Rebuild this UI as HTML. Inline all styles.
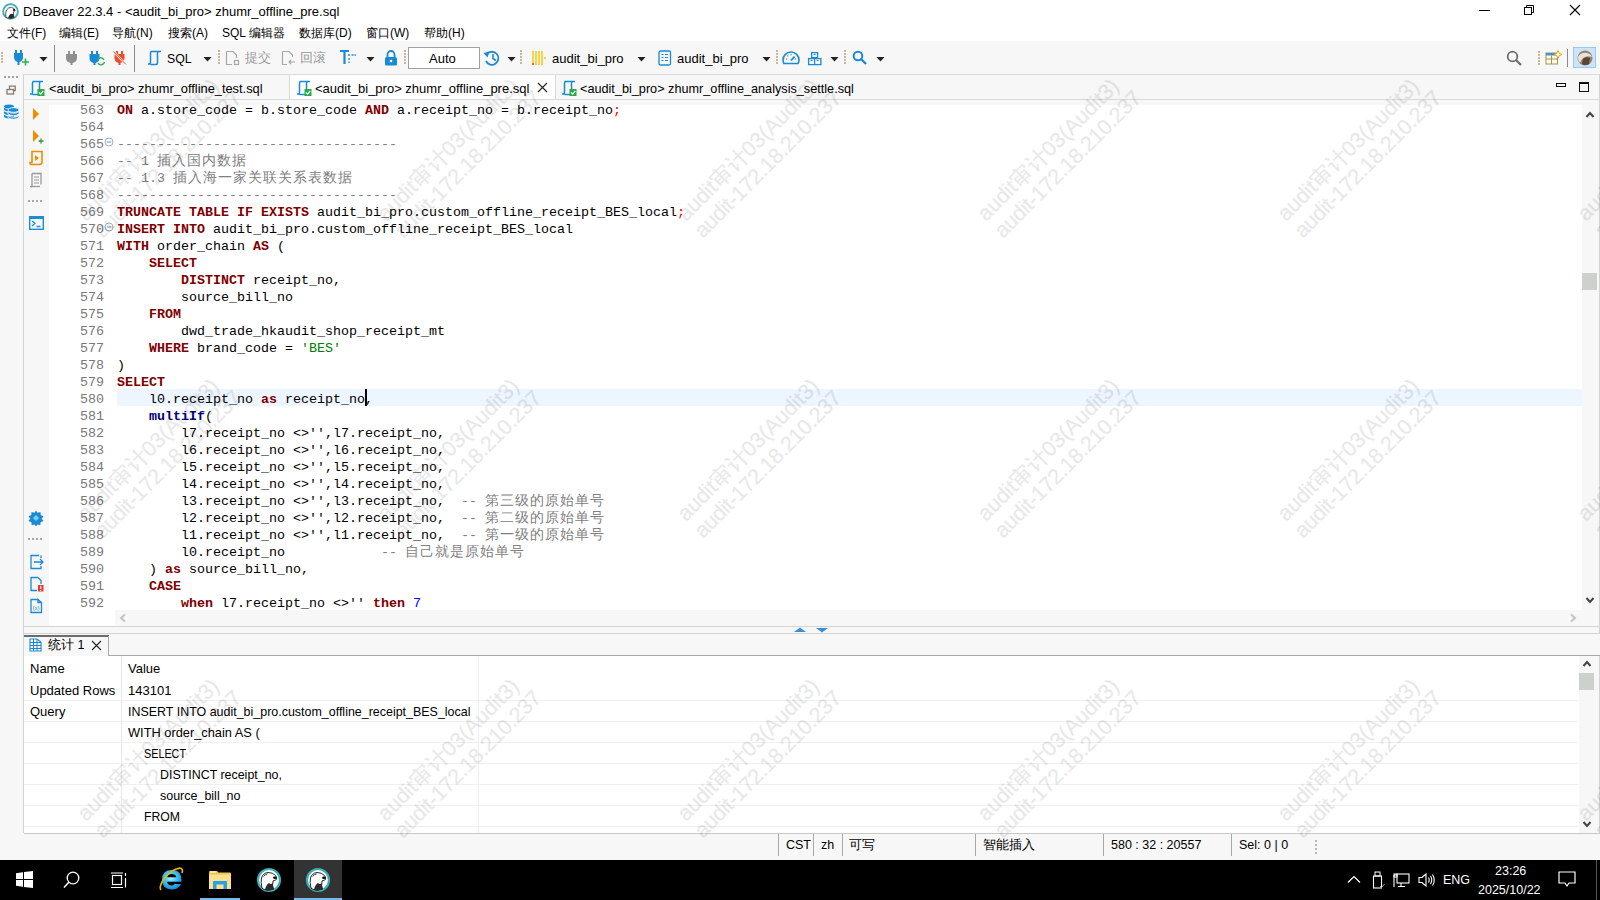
<!DOCTYPE html><html><head><meta charset="utf-8"><style>
html,body{margin:0;padding:0;width:1600px;height:900px;overflow:hidden;background:#f7f7f7}
.t{position:absolute;white-space:pre;line-height:1}
.b{position:absolute}
.ln{position:absolute;left:49px;width:55px;text-align:right;font-family:'Liberation Mono',monospace;font-size:13.33px;line-height:17px;color:#787878;white-space:pre}
.cl{position:absolute;left:117px;font-family:'Liberation Mono',monospace;font-size:13.33px;line-height:17px;color:#000;white-space:pre}
.cl b{font-weight:bold}
.wm{position:absolute;transform-origin:0 0;transform:rotate(-45deg) translate(0,-18px);font-family:'Liberation Sans',sans-serif;font-size:21.5px;line-height:23.5px;color:#000;-webkit-text-stroke:0.3px #000;opacity:0.085;white-space:pre;pointer-events:none}
.cj{font-size:14px;letter-spacing:1px}
</style></head><body>
<div class="b" style="left:0px;top:0px;width:1600px;height:41px;background:#fff"></div>
<div class="b" style="left:0px;top:41px;width:1600px;height:819px;background:#f7f7f7"></div>
<div class="t" style="left:23px;top:4px;font-size:13px;color:#000;font-family:'Liberation Sans', sans-serif;font-weight:normal;line-height:16px">DBeaver 22.3.4 - &lt;audit_bi_pro&gt; zhumr_offline_pre.sql</div>
<svg class="b" style="left:2px;top:3px" width="17" height="17" viewBox="0 0 17 17"><circle cx="8.5" cy="8.5" r="7.4" fill="#f2f2f2" stroke="#3ab0b8" stroke-width="1.8"/><path d="M4 14.5 Q3 10 4.5 7 Q6.5 4 9.5 4.5 Q12.5 5 13 7.5 L11.5 9 Q11 12 12 14.5 Q8 16.5 4 14.5 Z" fill="#fff" stroke="#333" stroke-width="0.8"/><ellipse cx="12" cy="7" rx="1.2" ry="0.9" fill="#111"/><path d="M6 15 Q7 11.5 9 10.5 Q10.5 11.5 11.5 10.5 L12 14.8 Q9 16 6 15 Z" fill="#2e2a28"/></svg>
<div class="b" style="left:1479px;top:10px;width:11px;height:1px;background:#000"></div>
<svg class="b" style="left:1522px;top:3px" width="14" height="14" viewBox="0 0 14 14"><rect x="2.5" y="4.5" width="7" height="7" fill="none" stroke="#000"/><path d="M4.5 4.5 V2.5 H11.5 V9.5 H9.5" fill="none" stroke="#000"/></svg>
<svg class="b" style="left:1568px;top:3px" width="14" height="14" viewBox="0 0 14 14"><path d="M2 2 L12 12 M12 2 L2 12" stroke="#000" stroke-width="1.1"/></svg>
<div class="t" style="left:7px;top:25px;font-size:12px;color:#000;font-family:'Liberation Sans', sans-serif;font-weight:normal;line-height:16px">文件(F)</div>
<div class="t" style="left:59px;top:25px;font-size:12px;color:#000;font-family:'Liberation Sans', sans-serif;font-weight:normal;line-height:16px">编辑(E)</div>
<div class="t" style="left:112px;top:25px;font-size:12px;color:#000;font-family:'Liberation Sans', sans-serif;font-weight:normal;line-height:16px">导航(N)</div>
<div class="t" style="left:168px;top:25px;font-size:12px;color:#000;font-family:'Liberation Sans', sans-serif;font-weight:normal;line-height:16px">搜索(A)</div>
<div class="t" style="left:222px;top:25px;font-size:12px;color:#000;font-family:'Liberation Sans', sans-serif;font-weight:normal;line-height:16px">SQL 编辑器</div>
<div class="t" style="left:299px;top:25px;font-size:12px;color:#000;font-family:'Liberation Sans', sans-serif;font-weight:normal;line-height:16px">数据库(D)</div>
<div class="t" style="left:366px;top:25px;font-size:12px;color:#000;font-family:'Liberation Sans', sans-serif;font-weight:normal;line-height:16px">窗口(W)</div>
<div class="t" style="left:424px;top:25px;font-size:12px;color:#000;font-family:'Liberation Sans', sans-serif;font-weight:normal;line-height:16px">帮助(H)</div>
<div class="b" style="left:1px;top:52px;width:2px;height:2px;background:#c8b89a"></div>
<div class="b" style="left:1px;top:55px;width:2px;height:2px;background:#c8b89a"></div>
<div class="b" style="left:1px;top:58px;width:2px;height:2px;background:#c8b89a"></div>
<div class="b" style="left:1px;top:61px;width:2px;height:2px;background:#c8b89a"></div>
<svg class="b" style="left:13px;top:49px" width="17" height="17" viewBox="0 0 17 17"><path d="M3 1 V4 M8 1 V4" stroke="#1b8ad6" stroke-width="2"/><path d="M1 4 H10 V8 Q10 12 6.5 13 V16 H4.5 V13 Q1 12 1 8 Z" fill="#1b8ad6"/><path d="M9 13 H16 M12.5 9.5 V16.5" stroke="#2db24a" stroke-width="1.6"/></svg>
<svg class="b" style="left:39px;top:57px" width="9" height="5" viewBox="0 0 9 5"><path d="M0.5 0 H8.5 L4.5 4.5 Z" fill="#222"/></svg>
<div class="b" style="left:54px;top:45px;width:1px;height:27px;background:#8c8c8c"></div>
<svg class="b" style="left:66px;top:51px" width="12" height="14" viewBox="0 0 12 14"><path d="M3 0 V3 M8 0 V3" stroke="#8f8f8f" stroke-width="2"/><path d="M0 3 H11 V7 Q11 11 6.5 12 V14 H4.5 V12 Q0 11 0 7 Z" fill="#8f8f8f"/></svg>
<svg class="b" style="left:89px;top:50px" width="16" height="16" viewBox="0 0 16 16"><path d="M3 1 V4 M8 1 V4" stroke="#1b8ad6" stroke-width="2"/><path d="M0.5 4 H10.5 V8 Q10.5 12 6.5 13 V15 H4.5 V13 Q0.5 12 0.5 8 Z" fill="#1b8ad6"/><path d="M8.5 10 A3.5 3.5 0 0 1 15 10 M15.5 12 A3.5 3.5 0 0 1 9 13" stroke="#2db24a" stroke-width="1.4" fill="none"/></svg>
<svg class="b" style="left:113px;top:50px" width="14" height="16" viewBox="0 0 14 16"><path d="M4 1 V4 M9 1 V4" stroke="#f04a2a" stroke-width="2"/><path d="M1.5 4 H11.5 V8 Q11.5 12 7.5 13 V15 H5.5 V13 Q1.5 12 1.5 8 Z" fill="#f04a2a"/><path d="M0.5 1.5 L13 14.5" stroke="#fff" stroke-width="2"/><path d="M0.5 1.5 L13 14.5" stroke="#f04a2a" stroke-width="1"/></svg>
<div class="b" style="left:134px;top:45px;width:1px;height:27px;background:#8c8c8c"></div>
<svg class="b" style="left:147px;top:50px" width="16" height="16" viewBox="0 0 16 16"><path d="M3.5 1.5 H13 M5 1.5 Q3.5 1.5 3.5 3 V12.5 Q3.5 14 2 14 H1 M3.5 14.5 H9 Q10.5 14.5 10.5 13 V3 Q10.5 1.5 12 1.5 H14" stroke="#1b8ad6" stroke-width="1.5" fill="none"/></svg>
<div class="t" style="left:167px;top:51.5px;font-size:12.3px;color:#000;font-family:'Liberation Sans', sans-serif;font-weight:normal;line-height:15px">SQL</div>
<svg class="b" style="left:203px;top:57px" width="9" height="5" viewBox="0 0 9 5"><path d="M0.5 0 H8.5 L4.5 4.5 Z" fill="#222"/></svg>
<div class="b" style="left:218px;top:50px;width:2px;height:2px;background:#c8b89a"></div>
<div class="b" style="left:218px;top:53px;width:2px;height:2px;background:#c8b89a"></div>
<div class="b" style="left:218px;top:56px;width:2px;height:2px;background:#c8b89a"></div>
<div class="b" style="left:218px;top:59px;width:2px;height:2px;background:#c8b89a"></div>
<div class="b" style="left:218px;top:62px;width:2px;height:2px;background:#c8b89a"></div>
<svg class="b" style="left:225px;top:50px" width="16" height="16" viewBox="0 0 16 16"><path d="M1.5 1.5 H8 L11.5 5 V8 M1.5 1.5 V14.5 H7" stroke="#a8a8a8" stroke-width="1.2" fill="none"/><rect x="9.5" y="10.5" width="4" height="4" fill="none" stroke="#a8a8a8" stroke-width="1.2"/></svg>
<div class="t" style="left:245px;top:51px;font-size:12.5px;color:#9a9a9a;font-family:'Liberation Sans', sans-serif;font-weight:normal;line-height:15px">提交</div>
<svg class="b" style="left:281px;top:50px" width="16" height="16" viewBox="0 0 16 16"><path d="M1.5 1.5 H8 L11.5 5 V7 M1.5 1.5 V14.5 H6" stroke="#a8a8a8" stroke-width="1.2" fill="none"/><path d="M8 12 H14 M10 10 L8 12 L10 14" stroke="#a8a8a8" stroke-width="1.1" fill="none"/></svg>
<div class="t" style="left:300px;top:51px;font-size:12.5px;color:#9a9a9a;font-family:'Liberation Sans', sans-serif;font-weight:normal;line-height:15px">回滚</div>
<svg class="b" style="left:339px;top:49px" width="18" height="17" viewBox="0 0 18 17"><path d="M1 2 H10 M5.5 2 V15" stroke="#1b8ad6" stroke-width="2.2"/><path d="M9 6 H11 M12.5 6 H14.5 M15.5 6 H17 M10 9 V11 M10 12.5 V14" stroke="#1b8ad6" stroke-width="1.3"/></svg>
<svg class="b" style="left:366px;top:57px" width="9" height="5" viewBox="0 0 9 5"><path d="M0.5 0 H8.5 L4.5 4.5 Z" fill="#222"/></svg>
<svg class="b" style="left:384px;top:50px" width="14" height="16" viewBox="0 0 14 16"><path d="M3.5 7 V4.5 A3.5 3.5 0 0 1 10.5 4.5 V7" stroke="#1b8ad6" stroke-width="1.8" fill="none"/><rect x="1" y="7" width="12" height="8.5" rx="1.5" fill="#1b8ad6"/><circle cx="7" cy="11" r="1.3" fill="#fff"/></svg>
<div class="b" style="left:404px;top:50px;width:2px;height:2px;background:#c8b89a"></div>
<div class="b" style="left:404px;top:53px;width:2px;height:2px;background:#c8b89a"></div>
<div class="b" style="left:404px;top:56px;width:2px;height:2px;background:#c8b89a"></div>
<div class="b" style="left:404px;top:59px;width:2px;height:2px;background:#c8b89a"></div>
<div class="b" style="left:404px;top:62px;width:2px;height:2px;background:#c8b89a"></div>
<div class="b" style="left:408px;top:47px;width:72px;height:22px;background:#fff;border:1px solid #a0a0a0;box-sizing:border-box"></div>
<div class="t" style="left:429px;top:51px;font-size:13px;color:#000;font-family:'Liberation Sans', sans-serif;font-weight:normal;line-height:15px">Auto</div>
<svg class="b" style="left:483px;top:49px" width="18" height="18" viewBox="0 0 18 18"><path d="M4 5 A6.5 6.5 0 1 1 3 12" stroke="#1b8ad6" stroke-width="1.8" fill="none"/><path d="M0.5 4 L4.5 8.5 L6.5 2.5 Z" fill="#1b8ad6"/><path d="M10 5 V9.5 L13 11.5" stroke="#1b8ad6" stroke-width="1.6" fill="none"/></svg>
<svg class="b" style="left:507px;top:57px" width="9" height="5" viewBox="0 0 9 5"><path d="M0.5 0 H8.5 L4.5 4.5 Z" fill="#222"/></svg>
<div class="b" style="left:520px;top:50px;width:2px;height:2px;background:#c8b89a"></div>
<div class="b" style="left:520px;top:53px;width:2px;height:2px;background:#c8b89a"></div>
<div class="b" style="left:520px;top:56px;width:2px;height:2px;background:#c8b89a"></div>
<div class="b" style="left:520px;top:59px;width:2px;height:2px;background:#c8b89a"></div>
<div class="b" style="left:520px;top:62px;width:2px;height:2px;background:#c8b89a"></div>
<svg class="b" style="left:531px;top:50px" width="16" height="16" viewBox="0 0 16 16"><path d="M2 1 V15 M5 1 V15 M8 1 V15 M11 1 V15" stroke="#f2c500" stroke-width="1.4"/><path d="M14 7 V9" stroke="#f2c500" stroke-width="1.4"/><path d="M2 13 V15" stroke="#e53935" stroke-width="1.4"/></svg>
<div class="t" style="left:552px;top:51px;font-size:13px;color:#000;font-family:'Liberation Sans', sans-serif;font-weight:normal;line-height:15px">audit_bi_pro</div>
<svg class="b" style="left:637px;top:57px" width="9" height="5" viewBox="0 0 9 5"><path d="M0.5 0 H8.5 L4.5 4.5 Z" fill="#222"/></svg>
<svg class="b" style="left:658px;top:50px" width="14" height="16" viewBox="0 0 14 16"><rect x="1" y="1" width="11.5" height="14" rx="1.5" fill="none" stroke="#1b8ad6" stroke-width="1.3"/><path d="M3.5 4.5 H5.5 M7 4.5 H10 M3.5 7.5 H5.5 M7 7.5 H10 M3.5 10.5 H5.5 M7 10.5 H10" stroke="#1b8ad6" stroke-width="1.2"/></svg>
<div class="t" style="left:677px;top:51px;font-size:13px;color:#000;font-family:'Liberation Sans', sans-serif;font-weight:normal;line-height:15px">audit_bi_pro</div>
<svg class="b" style="left:762px;top:57px" width="9" height="5" viewBox="0 0 9 5"><path d="M0.5 0 H8.5 L4.5 4.5 Z" fill="#222"/></svg>
<div class="b" style="left:776px;top:50px;width:2px;height:2px;background:#c8b89a"></div>
<div class="b" style="left:776px;top:53px;width:2px;height:2px;background:#c8b89a"></div>
<div class="b" style="left:776px;top:56px;width:2px;height:2px;background:#c8b89a"></div>
<div class="b" style="left:776px;top:59px;width:2px;height:2px;background:#c8b89a"></div>
<div class="b" style="left:776px;top:62px;width:2px;height:2px;background:#c8b89a"></div>
<svg class="b" style="left:782px;top:50px" width="18" height="16" viewBox="0 0 18 16"><path d="M2 13.5 Q1 12 1 10 A8 8 0 0 1 17 10 Q17 12 16 13.5 Z" stroke="#1b8ad6" stroke-width="1.6" fill="none"/><path d="M9 10.5 L12.5 6.5" stroke="#1b8ad6" stroke-width="1.8"/><path d="M4 9 H5.2 M9 4 V5.2 M12.8 9 H14 M5.5 5.5 L6.3 6.3" stroke="#1b8ad6" stroke-width="1.1"/></svg>
<svg class="b" style="left:807px;top:51px" width="16" height="15" viewBox="0 0 16 15"><rect x="4.6" y="1.6" width="6" height="5" fill="none" stroke="#1b8ad6" stroke-width="1.3"/><rect x="1.6" y="7.6" width="12.3" height="6" fill="none" stroke="#1b8ad6" stroke-width="1.3"/><path d="M7.6 7.6 V13.6 M6.5 3.5 H8.7 M3.5 9.5 H5.5 M9.5 9.5 H11.5" stroke="#1b8ad6" stroke-width="1.2"/></svg>
<svg class="b" style="left:830px;top:57px" width="9" height="5" viewBox="0 0 9 5"><path d="M0.5 0 H8.5 L4.5 4.5 Z" fill="#222"/></svg>
<div class="b" style="left:844px;top:50px;width:2px;height:2px;background:#c8b89a"></div>
<div class="b" style="left:844px;top:53px;width:2px;height:2px;background:#c8b89a"></div>
<div class="b" style="left:844px;top:56px;width:2px;height:2px;background:#c8b89a"></div>
<div class="b" style="left:844px;top:59px;width:2px;height:2px;background:#c8b89a"></div>
<div class="b" style="left:844px;top:62px;width:2px;height:2px;background:#c8b89a"></div>
<svg class="b" style="left:852px;top:50px" width="16" height="16" viewBox="0 0 16 16"><circle cx="6" cy="6" r="4.3" stroke="#1b8ad6" stroke-width="2" fill="none"/><path d="M9 9 L14 14" stroke="#1b8ad6" stroke-width="2.4"/></svg>
<svg class="b" style="left:876px;top:57px" width="9" height="5" viewBox="0 0 9 5"><path d="M0.5 0 H8.5 L4.5 4.5 Z" fill="#222"/></svg>
<svg class="b" style="left:1506px;top:50px" width="17" height="17" viewBox="0 0 17 17"><circle cx="6.5" cy="6.5" r="4.8" stroke="#6e6e6e" stroke-width="1.8" fill="none"/><path d="M10 10 L15 15" stroke="#6e6e6e" stroke-width="2.2"/></svg>
<div class="b" style="left:1538px;top:51px;width:2px;height:2px;background:#c8b89a"></div>
<div class="b" style="left:1538px;top:54px;width:2px;height:2px;background:#c8b89a"></div>
<div class="b" style="left:1538px;top:57px;width:2px;height:2px;background:#c8b89a"></div>
<div class="b" style="left:1538px;top:60px;width:2px;height:2px;background:#c8b89a"></div>
<div class="b" style="left:1538px;top:63px;width:2px;height:2px;background:#c8b89a"></div>
<svg class="b" style="left:1545px;top:50px" width="18" height="16" viewBox="0 0 18 16"><rect x="1" y="3" width="11.5" height="11" fill="#fbfbf0" stroke="#a8954a" stroke-width="1"/><rect x="1" y="3" width="11.5" height="2.5" fill="#4a90d9"/><path d="M1 9 H12.5 M6.5 5.5 V14" stroke="#a8954a" stroke-width="1"/><path d="M13 0.5 L14.2 3.3 L17 4.5 L14.2 5.7 L13 8.5 L11.8 5.7 L9 4.5 L11.8 3.3 Z" fill="#fff" stroke="#e0a800" stroke-width="1"/></svg>
<div class="b" style="left:1567px;top:49px;width:1px;height:18px;background:#8a8a8a"></div>
<div class="b" style="left:1573px;top:47px;width:23px;height:21px;background:#cce4f7;border:1px solid #99c9ef;box-sizing:border-box"></div>
<svg class="b" style="left:1577px;top:50px" width="16" height="16" viewBox="0 0 16 16"><circle cx="8" cy="8" r="7.5" fill="#9a8272"/><path d="M1 7 Q4 2 10 3 Q14 4 15 7 Q10 5 6 8 Q4 10 3 13 Q0.5 10 1 7 Z" fill="#e8e2dc"/><path d="M6 9 Q9 6 13 8 L12 14 Q8 16 5 14 Z" fill="#5a4538"/></svg>
<div class="b" style="left:4px;top:76px;width:2px;height:2px;background:#a0a0a0"></div>
<div class="b" style="left:8px;top:76px;width:2px;height:2px;background:#a0a0a0"></div>
<div class="b" style="left:12px;top:76px;width:2px;height:2px;background:#a0a0a0"></div>
<div class="b" style="left:16px;top:76px;width:2px;height:2px;background:#a0a0a0"></div>
<svg class="b" style="left:6px;top:85px" width="10" height="10" viewBox="0 0 10 10"><rect x="1" y="4.5" width="6.5" height="4.5" fill="none" stroke="#857a6c" stroke-width="1.3"/><path d="M3.5 4 V1.2 H9.2 V5.5 H7.8" fill="none" stroke="#857a6c" stroke-width="1.3"/></svg>
<svg class="b" style="left:3px;top:104px" width="17" height="16" viewBox="0 0 17 16"><g fill="#1b8ad6"><ellipse cx="6" cy="2.5" rx="5" ry="2"/><path d="M1 3.8 Q6 7 11 3.8 V6 Q6 9 1 6 Z M1 7.3 Q6 10.5 11 7.3 V9.5 Q6 12.5 1 9.5 Z M1 10.8 Q6 14 11 10.8 V13 Q6 16 1 13 Z"/></g><g fill="#1b8ad6" stroke="#f7f7f7" stroke-width="0.9"><ellipse cx="10.5" cy="6" rx="5.5" ry="2.3"/><path d="M5 7.5 Q10.5 11 16 7.5 V10 Q10.5 13.5 5 10 Z M5 11.5 Q10.5 15 16 11.5 V13.5 Q10.5 17 5 13.5 Z"/></g></svg>
<div class="b" style="left:23px;top:74px;width:1577px;height:1px;background:#dcdcdc"></div>
<div class="b" style="left:23px;top:74px;width:1px;height:759px;background:#d4d4d4"></div>
<div class="b" style="left:24px;top:75px;width:1575px;height:24px;background:#f7f7f7"></div>
<div class="b" style="left:24px;top:99px;width:1576px;height:1px;background:#d9d9d9"></div>
<div class="b" style="left:290px;top:75px;width:265px;height:24px;background:#fff"></div>
<div class="b" style="left:289px;top:75px;width:1px;height:24px;background:#d9d9d9"></div>
<div class="b" style="left:555px;top:75px;width:1px;height:24px;background:#d9d9d9"></div>
<svg class="b" style="left:29px;top:80px" width="16" height="16" viewBox="0 0 16 16"><path d="M3.5 1.5 H13 M5 1.5 Q3.5 1.5 3.5 3 V12.5 Q3.5 14 2 14 H1 M3.5 14.5 H9 Q10.5 14.5 10.5 13 V3 Q10.5 1.5 12 1.5 H14" stroke="#1b8ad6" stroke-width="1.5" fill="none"/><rect x="8.5" y="9" width="7" height="7" fill="#2aa84a"/><path d="M10 12.5 L11.7 14.2 L14.3 10.8" stroke="#fff" stroke-width="1.2" fill="none"/></svg>
<div class="t" style="left:49px;top:81px;font-size:13px;color:#000;font-family:'Liberation Sans', sans-serif;font-weight:normal;line-height:15px;transform:scaleX(0.986);transform-origin:0 0">&lt;audit_bi_pro&gt; zhumr_offline_test.sql</div>
<svg class="b" style="left:296px;top:80px" width="16" height="16" viewBox="0 0 16 16"><path d="M3.5 1.5 H13 M5 1.5 Q3.5 1.5 3.5 3 V12.5 Q3.5 14 2 14 H1 M3.5 14.5 H9 Q10.5 14.5 10.5 13 V3 Q10.5 1.5 12 1.5 H14" stroke="#1b8ad6" stroke-width="1.5" fill="none"/><rect x="8.5" y="9" width="7" height="7" fill="#2aa84a"/><path d="M10 12.5 L11.7 14.2 L14.3 10.8" stroke="#fff" stroke-width="1.2" fill="none"/></svg>
<div class="t" style="left:315px;top:81px;font-size:13px;color:#000;font-family:'Liberation Sans', sans-serif;font-weight:normal;line-height:15px">&lt;audit_bi_pro&gt; zhumr_offline_pre.sql</div>
<svg class="b" style="left:537px;top:82px" width="11" height="11" viewBox="0 0 11 11"><path d="M1 1 L10 10 M10 1 L1 10" stroke="#222" stroke-width="1.1"/></svg>
<svg class="b" style="left:561px;top:80px" width="16" height="16" viewBox="0 0 16 16"><path d="M3.5 1.5 H13 M5 1.5 Q3.5 1.5 3.5 3 V12.5 Q3.5 14 2 14 H1 M3.5 14.5 H9 Q10.5 14.5 10.5 13 V3 Q10.5 1.5 12 1.5 H14" stroke="#1b8ad6" stroke-width="1.5" fill="none"/><rect x="8.5" y="9" width="7" height="7" fill="#2aa84a"/><path d="M10 12.5 L11.7 14.2 L14.3 10.8" stroke="#fff" stroke-width="1.2" fill="none"/></svg>
<div class="t" style="left:580px;top:81px;font-size:13px;color:#000;font-family:'Liberation Sans', sans-serif;font-weight:normal;line-height:15px;transform:scaleX(0.975);transform-origin:0 0">&lt;audit_bi_pro&gt; zhumr_offline_analysis_settle.sql</div>
<div class="b" style="left:1556px;top:83px;width:10px;height:4px;border:1.5px solid #111;box-sizing:border-box"></div>
<div class="b" style="left:1579px;top:82px;width:10px;height:10px;border:1.5px solid #111;border-top-width:2.5px;box-sizing:border-box"></div>
<div class="b" style="left:24px;top:100px;width:25px;height:526px;background:#f7f7f7"></div>
<div class="b" style="left:49px;top:105px;width:1533px;height:505px;background:#fff"></div>
<div class="b" style="left:49px;top:610px;width:1531px;height:16px;background:#fff"></div>
<div class="b" style="left:115px;top:610px;width:1465px;height:16px;background:#f7f7f7"></div>
<svg class="b" style="left:119px;top:613px" width="9" height="10" viewBox="0 0 9 10"><path d="M6 1.5 L2 5 L6 8.5" stroke="#c0c4c0" stroke-width="2" fill="none"/></svg>
<svg class="b" style="left:1569px;top:613px" width="9" height="10" viewBox="0 0 9 10"><path d="M2 1.5 L6 5 L2 8.5" stroke="#c0c4c0" stroke-width="2" fill="none"/></svg>
<div class="b" style="left:1582px;top:100px;width:17px;height:526px;background:#f7f7f7"></div>
<div class="b" style="left:1599px;top:74px;width:1px;height:759px;background:#d4d4d4"></div>
<svg class="b" style="left:1585px;top:110px" width="10" height="9" viewBox="0 0 10 9"><path d="M1.5 7 L5 3 L8.5 7" stroke="#444" stroke-width="2" fill="none"/></svg>
<svg class="b" style="left:1585px;top:596px" width="10" height="9" viewBox="0 0 10 9"><path d="M1.5 2 L5 6 L8.5 2" stroke="#444" stroke-width="2" fill="none"/></svg>
<div class="b" style="left:1582px;top:273px;width:15px;height:17px;background:#cdd1cd"></div>
<div class="b" style="left:24px;top:626px;width:1575px;height:1px;background:#d4d4d4"></div>
<div class="b" style="left:24px;top:633px;width:1575px;height:1px;background:#d4d4d4"></div>
<svg class="b" style="left:793px;top:627px" width="16" height="6" viewBox="0 0 16 6"><path d="M1 5 L7 0.5 L13 5 Z" fill="#3d8fd1"/></svg>
<svg class="b" style="left:815px;top:627px" width="16" height="6" viewBox="0 0 16 6"><path d="M1 1 L7 5.5 L13 1 Z" fill="#3d8fd1"/></svg>
<div class="b" style="left:117px;top:389px;width:1465px;height:17px;background:#edf5fe"></div>
<div class="b" style="left:0;top:104px;width:1582px;height:506px;overflow:hidden">
<div class="ln" style="top:-2px">563</div>
<div class="cl" style="top:-2px"><b style="color:#800000">ON</b> a.store_code = b.store_code <b style="color:#800000">AND</b> a.receipt_no = b.receipt_no<span style="color:#f00">;</span></div>
<div class="ln" style="top:15px">564</div>
<div class="cl" style="top:15px"></div>
<div class="ln" style="top:32px">565</div>
<div class="cl" style="top:32px"><span style="color:#808080">-----------------------------------</span></div>
<div class="ln" style="top:49px">566</div>
<div class="cl" style="top:49px"><span style="color:#808080">-- 1 <span class="cj">插入国内数据</span></span></div>
<div class="ln" style="top:66px">567</div>
<div class="cl" style="top:66px"><span style="color:#808080">-- 1.3 <span class="cj">插入海一家关联关系表数据</span></span></div>
<div class="ln" style="top:83px">568</div>
<div class="cl" style="top:83px"><span style="color:#808080">-----------------------------------</span></div>
<div class="ln" style="top:100px">569</div>
<div class="cl" style="top:100px"><b style="color:#800000">TRUNCATE</b> <b style="color:#800000">TABLE</b> <b style="color:#800000">IF</b> <b style="color:#800000">EXISTS</b> audit_bi_pro.custom_offline_receipt_BES_local<span style="color:#f00">;</span></div>
<div class="ln" style="top:117px">570</div>
<div class="cl" style="top:117px"><b style="color:#800000">INSERT</b> <b style="color:#800000">INTO</b> audit_bi_pro.custom_offline_receipt_BES_local</div>
<div class="ln" style="top:134px">571</div>
<div class="cl" style="top:134px"><b style="color:#800000">WITH</b> order_chain <b style="color:#800000">AS</b> (</div>
<div class="ln" style="top:151px">572</div>
<div class="cl" style="top:151px">    <b style="color:#800000">SELECT</b></div>
<div class="ln" style="top:168px">573</div>
<div class="cl" style="top:168px">        <b style="color:#800000">DISTINCT</b> receipt_no,</div>
<div class="ln" style="top:185px">574</div>
<div class="cl" style="top:185px">        source_bill_no</div>
<div class="ln" style="top:202px">575</div>
<div class="cl" style="top:202px">    <b style="color:#800000">FROM</b></div>
<div class="ln" style="top:219px">576</div>
<div class="cl" style="top:219px">        dwd_trade_hkaudit_shop_receipt_mt</div>
<div class="ln" style="top:236px">577</div>
<div class="cl" style="top:236px">    <b style="color:#800000">WHERE</b> brand_code = <span style="color:#008000">'BES'</span></div>
<div class="ln" style="top:253px">578</div>
<div class="cl" style="top:253px">)</div>
<div class="ln" style="top:270px">579</div>
<div class="cl" style="top:270px"><b style="color:#800000">SELECT</b></div>
<div class="ln" style="top:287px">580</div>
<div class="cl" style="top:287px">    l0.receipt_no <b style="color:#800000">as</b> receipt_no,</div>
<div class="ln" style="top:304px">581</div>
<div class="cl" style="top:304px">    <b style="color:#000080">multiIf</b>(</div>
<div class="ln" style="top:321px">582</div>
<div class="cl" style="top:321px">        l7.receipt_no &lt;&gt;'',l7.receipt_no,</div>
<div class="ln" style="top:338px">583</div>
<div class="cl" style="top:338px">        l6.receipt_no &lt;&gt;'',l6.receipt_no,</div>
<div class="ln" style="top:355px">584</div>
<div class="cl" style="top:355px">        l5.receipt_no &lt;&gt;'',l5.receipt_no,</div>
<div class="ln" style="top:372px">585</div>
<div class="cl" style="top:372px">        l4.receipt_no &lt;&gt;'',l4.receipt_no,</div>
<div class="ln" style="top:389px">586</div>
<div class="cl" style="top:389px">        l3.receipt_no &lt;&gt;'',l3.receipt_no,  <span style="color:#808080">-- <span class="cj">第三级的原始单号</span></span></div>
<div class="ln" style="top:406px">587</div>
<div class="cl" style="top:406px">        l2.receipt_no &lt;&gt;'',l2.receipt_no,  <span style="color:#808080">-- <span class="cj">第二级的原始单号</span></span></div>
<div class="ln" style="top:423px">588</div>
<div class="cl" style="top:423px">        l1.receipt_no &lt;&gt;'',l1.receipt_no,  <span style="color:#808080">-- <span class="cj">第一级的原始单号</span></span></div>
<div class="ln" style="top:440px">589</div>
<div class="cl" style="top:440px">        l0.receipt_no            <span style="color:#808080">-- <span class="cj">自己就是原始单号</span></span></div>
<div class="ln" style="top:457px">590</div>
<div class="cl" style="top:457px">    ) <b style="color:#800000">as</b> source_bill_no,</div>
<div class="ln" style="top:474px">591</div>
<div class="cl" style="top:474px">    <b style="color:#800000">CASE</b></div>
<div class="ln" style="top:491px">592</div>
<div class="cl" style="top:491px">        <b style="color:#800000">when</b> l7.receipt_no &lt;&gt;'' <b style="color:#800000">then</b> <span style="color:#0000ff">7</span></div>
</div>
<svg class="b" style="left:104px;top:137px" width="10" height="10" viewBox="0 0 10 10"><circle cx="5" cy="5" r="4" fill="#fff" stroke="#9bb0c8"/><path d="M2.8 5 H7.2" stroke="#7890a8"/></svg>
<svg class="b" style="left:104px;top:222px" width="10" height="10" viewBox="0 0 10 10"><circle cx="5" cy="5" r="4" fill="#fff" stroke="#9bb0c8"/><path d="M2.8 5 H7.2" stroke="#7890a8"/></svg>
<div class="b" style="left:365px;top:389px;width:2px;height:17px;background:#000"></div>
<svg class="b" style="left:32px;top:107px" width="10" height="14" viewBox="0 0 10 14"><path d="M1 1 L7 7 L1 13 Z" fill="#f58a00"/></svg>
<svg class="b" style="left:32px;top:129px" width="14" height="16" viewBox="0 0 14 16"><path d="M1 1 L7 7 L1 13 Z" fill="#f58a00"/><path d="M6.5 12 H11.5 M9 9.5 V14.5" stroke="#2a9d3a" stroke-width="1.3"/></svg>
<svg class="b" style="left:29px;top:150px" width="16" height="16" viewBox="0 0 16 16"><path d="M3 1.5 H13 V12 Q13 14.5 10.5 14.5 H2 Q1 14.5 1 12.5 H3 Z" fill="none" stroke="#f08c00" stroke-width="1.6"/><path d="M6 5 L10 8 L6 11 Z" fill="#f08c00"/></svg>
<svg class="b" style="left:29px;top:172px" width="16" height="16" viewBox="0 0 16 16"><path d="M3 1.5 H12 V12.5 M3 1.5 V14 Q3 15 2 15" fill="none" stroke="#9a9a9a" stroke-width="1.3"/><path d="M5 5 H10 M5 8 H10 M5 11 H10" stroke="#9a9a9a"/><path d="M1 14.5 H11" stroke="#9a9a9a" stroke-width="1.3"/></svg>
<div class="b" style="left:28px;top:200px;width:2px;height:2px;background:#aca896"></div>
<div class="b" style="left:32px;top:200px;width:2px;height:2px;background:#aca896"></div>
<div class="b" style="left:36px;top:200px;width:2px;height:2px;background:#aca896"></div>
<div class="b" style="left:40px;top:200px;width:2px;height:2px;background:#aca896"></div>
<svg class="b" style="left:29px;top:216px" width="15" height="14" viewBox="0 0 15 14"><rect x="0.7" y="0.7" width="13.6" height="12.6" fill="none" stroke="#1a8fd8" stroke-width="1.4"/><rect x="0.7" y="0.7" width="13.6" height="2.3" fill="#1a8fd8"/><path d="M3 5 L6 7.5 L3 10 M7.5 10.5 H11.5" stroke="#1a8fd8" stroke-width="1.3" fill="none"/></svg>
<svg class="b" style="left:28px;top:510px" width="16" height="16" viewBox="0 0 16 16"><path fill-opacity="1" d="M8 0.5 L9.5 2.8 L12.5 2 L12.7 5 L15.5 6.3 L13.8 8.7 L15.5 11 L12.6 12.3 L12.3 15.2 L9.5 14.4 L8 16.5 L6.5 14.4 L3.7 15.2 L3.4 12.3 L0.5 11 L2.2 8.6 L0.5 6.3 L3.3 5 L3.5 2 L6.5 2.8 Z" fill="#1b8ad6"/><path d="M8 5 L11 8 L8 11 L5 8 Z" fill="#7fd0f0"/></svg>
<div class="b" style="left:28px;top:538px;width:2px;height:2px;background:#aca896"></div>
<div class="b" style="left:32px;top:538px;width:2px;height:2px;background:#aca896"></div>
<div class="b" style="left:36px;top:538px;width:2px;height:2px;background:#aca896"></div>
<div class="b" style="left:40px;top:538px;width:2px;height:2px;background:#aca896"></div>
<svg class="b" style="left:29px;top:554px" width="15" height="16" viewBox="0 0 15 16"><path d="M10 1.5 H2 V14.5 H12 V12 M12 4 V1.5" stroke="#1b8ad6" stroke-width="1.3" fill="none"/><path d="M5 8 H14 M11 5 L14 8 L11 11" stroke="#1b8ad6" stroke-width="1.3" fill="none"/></svg>
<svg class="b" style="left:29px;top:576px" width="15" height="16" viewBox="0 0 15 16"><path d="M9 1.5 H2 V14.5 H8 M9 1.5 L12 4.5 V8" stroke="#1b8ad6" stroke-width="1.3" fill="none"/><rect x="9" y="9" width="5.5" height="6.5" fill="#e53935"/><path d="M11.75 10 V13 M11.75 14 V15" stroke="#fff" stroke-width="1.2"/></svg>
<svg class="b" style="left:29px;top:598px" width="15" height="16" viewBox="0 0 15 16"><path d="M9 1.5 H2 V14.5 H12.5 V4.5 L9 1.5 V4.5 H12.5" stroke="#1b8ad6" stroke-width="1.3" fill="none"/><text x="7" y="12" font-size="6" fill="#1b8ad6" text-anchor="middle" font-family="Liberation Sans">(x)</text></svg>
<div class="b" style="left:24px;top:634px;width:1576px;height:22px;background:#f7f7f7"></div>
<div class="b" style="left:109px;top:655px;width:1491px;height:1px;background:#a9a9a9"></div>
<div class="b" style="left:24px;top:635px;width:85px;height:2px;background:#6c6c6c"></div>
<div class="b" style="left:108px;top:636px;width:1px;height:20px;background:#a9a9a9"></div>
<svg class="b" style="left:29px;top:638px" width="13" height="14" viewBox="0 0 13 14"><path d="M1 1 H8 L12 4 V13 H1 Z" fill="#fff" stroke="#1b8ad6" stroke-width="1.1"/><path d="M1 4.5 H12 M1 7.5 H12 M1 10.5 H12 M4.5 1 V13 M8 1 V13" stroke="#1b8ad6" stroke-width="1"/></svg>
<div class="t" style="left:48px;top:638px;font-size:12.5px;color:#000;font-family:'Liberation Sans', sans-serif;font-weight:normal;line-height:15px">统计 1</div>
<svg class="b" style="left:91px;top:640px" width="11" height="11" viewBox="0 0 11 11"><path d="M1 1 L10 10 M10 1 L1 10" stroke="#222" stroke-width="1.1"/></svg>
<div class="b" style="left:24px;top:656px;width:1556px;height:177px;background:#fff"></div>
<div class="b" style="left:121px;top:656px;width:1px;height:177px;background:#e6e6e6"></div>
<div class="b" style="left:478px;top:656px;width:1px;height:177px;background:#eef0f3"></div>
<div class="t" style="left:30px;top:661px;font-size:13px;color:#000;font-family:'Liberation Sans', sans-serif;font-weight:normal;line-height:15px">Name</div>
<div class="t" style="left:128px;top:661px;font-size:13px;color:#000;font-family:'Liberation Sans', sans-serif;font-weight:normal;line-height:15px">Value</div>
<div class="t" style="left:30px;top:683px;font-size:13px;color:#000;font-family:'Liberation Sans', sans-serif;font-weight:normal;line-height:15px">Updated Rows</div>
<div class="t" style="left:128px;top:683px;font-size:13px;color:#000;font-family:'Liberation Sans', sans-serif;font-weight:normal;line-height:15px;transform:scaleX(1);transform-origin:0 0">143101</div>
<div class="b" style="left:24px;top:700px;width:1554px;height:1px;background:#f0f0f0"></div>
<div class="t" style="left:30px;top:704px;font-size:13px;color:#000;font-family:'Liberation Sans', sans-serif;font-weight:normal;line-height:15px">Query</div>
<div class="t" style="left:128px;top:704px;font-size:13px;color:#000;font-family:'Liberation Sans', sans-serif;font-weight:normal;line-height:15px;transform:scaleX(0.958);transform-origin:0 0">INSERT INTO audit_bi_pro.custom_offline_receipt_BES_local</div>
<div class="b" style="left:24px;top:721px;width:1554px;height:1px;background:#f0f0f0"></div>
<div class="t" style="left:30px;top:725px;font-size:13px;color:#000;font-family:'Liberation Sans', sans-serif;font-weight:normal;line-height:15px"></div>
<div class="t" style="left:128px;top:725px;font-size:13px;color:#000;font-family:'Liberation Sans', sans-serif;font-weight:normal;line-height:15px;transform:scaleX(0.985);transform-origin:0 0">WITH order_chain AS (</div>
<div class="b" style="left:24px;top:742px;width:1554px;height:1px;background:#f0f0f0"></div>
<div class="t" style="left:30px;top:746px;font-size:13px;color:#000;font-family:'Liberation Sans', sans-serif;font-weight:normal;line-height:15px"></div>
<div class="t" style="left:144px;top:746px;font-size:13px;color:#000;font-family:'Liberation Sans', sans-serif;font-weight:normal;line-height:15px;transform:scaleX(0.83);transform-origin:0 0">SELECT</div>
<div class="b" style="left:24px;top:763px;width:1554px;height:1px;background:#f0f0f0"></div>
<div class="t" style="left:30px;top:767px;font-size:13px;color:#000;font-family:'Liberation Sans', sans-serif;font-weight:normal;line-height:15px"></div>
<div class="t" style="left:160px;top:767px;font-size:13px;color:#000;font-family:'Liberation Sans', sans-serif;font-weight:normal;line-height:15px;transform:scaleX(0.955);transform-origin:0 0">DISTINCT receipt_no,</div>
<div class="b" style="left:24px;top:784px;width:1554px;height:1px;background:#f0f0f0"></div>
<div class="t" style="left:30px;top:788px;font-size:13px;color:#000;font-family:'Liberation Sans', sans-serif;font-weight:normal;line-height:15px"></div>
<div class="t" style="left:160px;top:788px;font-size:13px;color:#000;font-family:'Liberation Sans', sans-serif;font-weight:normal;line-height:15px;transform:scaleX(0.96);transform-origin:0 0">source_bill_no</div>
<div class="b" style="left:24px;top:805px;width:1554px;height:1px;background:#f0f0f0"></div>
<div class="t" style="left:30px;top:809px;font-size:13px;color:#000;font-family:'Liberation Sans', sans-serif;font-weight:normal;line-height:15px"></div>
<div class="t" style="left:144px;top:809px;font-size:13px;color:#000;font-family:'Liberation Sans', sans-serif;font-weight:normal;line-height:15px;transform:scaleX(0.94);transform-origin:0 0">FROM</div>
<div class="b" style="left:24px;top:826px;width:1554px;height:1px;background:#f0f0f0"></div>
<div class="t" style="left:30px;top:830px;font-size:13px;color:#000;font-family:'Liberation Sans', sans-serif;font-weight:normal;line-height:15px"></div>
<div class="t" style="left:160px;top:830px;font-size:13px;color:#000;font-family:'Liberation Sans', sans-serif;font-weight:normal;line-height:15px;transform:scaleX(0.96);transform-origin:0 0">dwd_trade_hkaudit_shop_receipt_mt</div>
<div class="b" style="left:1579px;top:656px;width:20px;height:177px;background:#f7f7f7"></div>
<svg class="b" style="left:1582px;top:659px" width="10" height="9" viewBox="0 0 10 9"><path d="M1.5 7 L5 3 L8.5 7" stroke="#444" stroke-width="2" fill="none"/></svg>
<svg class="b" style="left:1582px;top:820px" width="10" height="9" viewBox="0 0 10 9"><path d="M1.5 2 L5 6 L8.5 2" stroke="#444" stroke-width="2" fill="none"/></svg>
<div class="b" style="left:1579px;top:673px;width:15px;height:17px;background:#cdd1cd"></div>
<div class="b" style="left:24px;top:833px;width:1576px;height:1px;background:#c8c8c8"></div>
<div class="b" style="left:0px;top:834px;width:1600px;height:26px;background:#f7f7f7"></div>
<div class="b" style="left:778px;top:834px;width:1px;height:22px;background:#a8a8a8"></div>
<div class="b" style="left:813px;top:834px;width:1px;height:22px;background:#a8a8a8"></div>
<div class="b" style="left:842px;top:834px;width:1px;height:22px;background:#a8a8a8"></div>
<div class="b" style="left:975px;top:834px;width:1px;height:22px;background:#a8a8a8"></div>
<div class="b" style="left:1103px;top:834px;width:1px;height:22px;background:#a8a8a8"></div>
<div class="b" style="left:1231px;top:834px;width:1px;height:22px;background:#a8a8a8"></div>
<div class="t" style="left:786px;top:838px;font-size:12.5px;color:#000;font-family:'Liberation Sans', sans-serif;font-weight:normal;line-height:15px">CST</div>
<div class="t" style="left:821px;top:838px;font-size:12.5px;color:#000;font-family:'Liberation Sans', sans-serif;font-weight:normal;line-height:15px">zh</div>
<div class="t" style="left:849px;top:838px;font-size:12.5px;color:#000;font-family:'Liberation Sans', sans-serif;font-weight:normal;line-height:15px">可写</div>
<div class="t" style="left:983px;top:838px;font-size:12.5px;color:#000;font-family:'Liberation Sans', sans-serif;font-weight:normal;line-height:15px">智能插入</div>
<div class="t" style="left:1111px;top:838px;font-size:12.5px;color:#000;font-family:'Liberation Sans', sans-serif;font-weight:normal;line-height:15px">580 : 32 : 20557</div>
<div class="t" style="left:1239px;top:838px;font-size:12.5px;color:#000;font-family:'Liberation Sans', sans-serif;font-weight:normal;line-height:15px">Sel: 0 | 0</div>
<div class="b" style="left:1315px;top:840px;width:2px;height:2px;background:#b8b8b8"></div>
<div class="b" style="left:1315px;top:844px;width:2px;height:2px;background:#b8b8b8"></div>
<div class="b" style="left:1315px;top:848px;width:2px;height:2px;background:#b8b8b8"></div>
<div class="b" style="left:1315px;top:852px;width:2px;height:2px;background:#b8b8b8"></div>
<div class="b" style="left:0px;top:860px;width:1600px;height:40px;background:#000"></div>
<svg class="b" style="left:16px;top:871px" width="17" height="17" viewBox="0 0 17 17"><path d="M0 2.3 L7 1.3 V8 H0 Z M8 1.1 L17 0 V8 H8 Z M0 9 H7 V15.7 L0 14.7 Z M8 9 H17 V17 L8 15.9 Z" fill="#fff"/></svg>
<svg class="b" style="left:63px;top:871px" width="17" height="17" viewBox="0 0 17 17"><circle cx="10" cy="7" r="5.8" stroke="#fff" stroke-width="1.3" fill="none"/><path d="M6 11 L1 16.5" stroke="#fff" stroke-width="1.5"/></svg>
<svg class="b" style="left:111px;top:872px" width="17" height="17" viewBox="0 0 17 17"><rect x="1.5" y="3.5" width="9" height="9" fill="none" stroke="#fff" stroke-width="1.2"/><path d="M0 1 H12 M0 15.5 H12 M14.5 1 V4 M14.5 6 V15.5" stroke="#fff" stroke-width="1.2"/></svg>
<svg class="b" style="left:158px;top:866px" width="26" height="26" viewBox="0 0 26 26"><defs><radialGradient id="ieg" cx="0.45" cy="0.4" r="0.65"><stop offset="0" stop-color="#aef0ff"/><stop offset="0.5" stop-color="#3cc0f5"/><stop offset="1" stop-color="#1580cc"/></radialGradient></defs><path d="M4 13.5 H23.5 Q23.5 4 13.8 4 Q4 4 4 13.8 Q4 23.5 13.8 23.5 Q20.5 23.5 23 18 H16.5 Q15.5 19.5 13.8 19.5 Q9.5 19.5 9 15.8 H23.5 V13.5 Z M9.2 11.2 Q10 8 13.8 8 Q17.6 8 18.4 11.2 Z" fill="url(#ieg)" fill-rule="evenodd"/><path d="M3 24 Q0.5 21 6.5 12 Q13.5 3.5 21.5 2.2 Q25.5 2 24 7" stroke="#e8b400" stroke-width="1.7" fill="none"/></svg>
<div class="b" style="left:200px;top:898px;width:40px;height:2px;background:#76b9ed"></div>
<svg class="b" style="left:209px;top:870px" width="22" height="20" viewBox="0 0 22 20"><path d="M0 2 Q0 1 1 1 H8 L9.5 2.5 H21 Q22 2.5 22 3.5 V19 H0 Z" fill="#f0c44c"/><path d="M0 4.5 H22 V19 H0 Z" fill="#fbe08e"/><path d="M1 2 H7" stroke="#fff" stroke-width="1"/><path d="M4 11 H18 V19 H14.5 V14.5 H7.5 V19 H4 Z" fill="#2b9ee8"/></svg>
<svg class="b" style="left:256px;top:867px" width="26" height="26" viewBox="0 0 26 26"><circle cx="13" cy="13" r="11" fill="#fff" stroke="#3ab0b8" stroke-width="2.2"/><path d="M6 21 Q4.5 15 5.5 11 Q7 6 12 5.5 Q17 5.5 19.5 8.5 Q21 10 20.5 12 Q20 13.5 18 13.5 L17 14 Q16 19 17.5 22 Q12 24.5 7 22 Z" fill="#fff" stroke="#222" stroke-width="1"/><ellipse cx="18.8" cy="10.8" rx="1.8" ry="1.2" fill="#111"/><path d="M9 23 Q10 17.5 13 16 Q15 18 16.5 16 L17.5 22.5 Q13 24.5 9 23 Z" fill="#2e2a28"/><path d="M7.5 9.5 Q9 7.5 11.5 7" stroke="#222" stroke-width="0.9" fill="none"/></svg>
<div class="b" style="left:294px;top:860px;width:48px;height:40px;background:#333"></div>
<div class="b" style="left:294px;top:898px;width:48px;height:2px;background:#76b9ed"></div>
<svg class="b" style="left:305px;top:867px" width="26" height="26" viewBox="0 0 26 26"><circle cx="13" cy="13" r="11" fill="#fff" stroke="#3ab0b8" stroke-width="2.2"/><path d="M6 21 Q4.5 15 5.5 11 Q7 6 12 5.5 Q17 5.5 19.5 8.5 Q21 10 20.5 12 Q20 13.5 18 13.5 L17 14 Q16 19 17.5 22 Q12 24.5 7 22 Z" fill="#fff" stroke="#222" stroke-width="1"/><ellipse cx="18.8" cy="10.8" rx="1.8" ry="1.2" fill="#111"/><path d="M9 23 Q10 17.5 13 16 Q15 18 16.5 16 L17.5 22.5 Q13 24.5 9 23 Z" fill="#2e2a28"/><path d="M7.5 9.5 Q9 7.5 11.5 7" stroke="#222" stroke-width="0.9" fill="none"/></svg>
<svg class="b" style="left:1347px;top:875px" width="14" height="9" viewBox="0 0 14 9"><path d="M1 7.5 L7 1.5 L13 7.5" stroke="#fff" stroke-width="1.2" fill="none"/></svg>
<svg class="b" style="left:1372px;top:871px" width="13" height="18" viewBox="0 0 13 18"><rect x="3" y="1" width="5" height="4" fill="none" stroke="#fff"/><rect x="1.5" y="5" width="8" height="12" fill="none" stroke="#fff" stroke-width="1.1"/><path d="M8 15 L9.5 16.5 L12.5 13" stroke="#aaa" fill="none"/></svg>
<svg class="b" style="left:1393px;top:872px" width="17" height="16" viewBox="0 0 17 16"><rect x="4" y="2" width="12" height="9" fill="none" stroke="#fff" stroke-width="1.1"/><path d="M1 3 V15 M1 3 H4 M8 11 V14 M5 14.5 H12" stroke="#fff" stroke-width="1.1"/><rect x="1" y="2" width="3" height="3" fill="none" stroke="#fff"/></svg>
<svg class="b" style="left:1418px;top:872px" width="18" height="16" viewBox="0 0 18 16"><path d="M1 5.5 H4 L8 2 V14 L4 10.5 H1 Z" fill="none" stroke="#fff" stroke-width="1.1"/><path d="M10.5 5.5 Q12 8 10.5 10.5 M12.5 4 Q15 8 12.5 12 M14.5 2.5 Q18 8 14.5 13.5" stroke="#fff" stroke-width="1.1" fill="none"/></svg>
<div class="t" style="left:1443px;top:873px;font-size:12.5px;color:#fff;font-family:'Liberation Sans', sans-serif;font-weight:normal;line-height:15px">ENG</div>
<div class="t" style="left:1495px;top:864px;font-size:12.5px;color:#fff;font-family:'Liberation Sans', sans-serif;font-weight:normal;line-height:15px">23:26</div>
<div class="t" style="left:1478px;top:883px;font-size:12.5px;color:#fff;font-family:'Liberation Sans', sans-serif;font-weight:normal;line-height:15px">2025/10/22</div>
<svg class="b" style="left:1558px;top:871px" width="19" height="18" viewBox="0 0 19 18"><path d="M1 1 H17 V12 H11 L9 15 L7 12 H1 Z" fill="none" stroke="#fff" stroke-width="1.2"/></svg>
<div class="b" style="left:1596px;top:860px;width:1px;height:40px;background:#555"></div>
<div class="wm" style="left:86px;top:222px"><div>audit审计03(Audit3)</div><div style="letter-spacing:-0.3px">audit-172.18.210.237</div></div>
<div class="wm" style="left:386px;top:222px"><div>audit审计03(Audit3)</div><div style="letter-spacing:-0.3px">audit-172.18.210.237</div></div>
<div class="wm" style="left:686px;top:222px"><div>audit审计03(Audit3)</div><div style="letter-spacing:-0.3px">audit-172.18.210.237</div></div>
<div class="wm" style="left:986px;top:222px"><div>audit审计03(Audit3)</div><div style="letter-spacing:-0.3px">audit-172.18.210.237</div></div>
<div class="wm" style="left:1286px;top:222px"><div>audit审计03(Audit3)</div><div style="letter-spacing:-0.3px">audit-172.18.210.237</div></div>
<div class="wm" style="left:1586px;top:222px"><div>audit审计03(Audit3)</div><div style="letter-spacing:-0.3px">audit-172.18.210.237</div></div>
<div class="wm" style="left:86px;top:522px"><div>audit审计03(Audit3)</div><div style="letter-spacing:-0.3px">audit-172.18.210.237</div></div>
<div class="wm" style="left:386px;top:522px"><div>audit审计03(Audit3)</div><div style="letter-spacing:-0.3px">audit-172.18.210.237</div></div>
<div class="wm" style="left:686px;top:522px"><div>audit审计03(Audit3)</div><div style="letter-spacing:-0.3px">audit-172.18.210.237</div></div>
<div class="wm" style="left:986px;top:522px"><div>audit审计03(Audit3)</div><div style="letter-spacing:-0.3px">audit-172.18.210.237</div></div>
<div class="wm" style="left:1286px;top:522px"><div>audit审计03(Audit3)</div><div style="letter-spacing:-0.3px">audit-172.18.210.237</div></div>
<div class="wm" style="left:1586px;top:522px"><div>audit审计03(Audit3)</div><div style="letter-spacing:-0.3px">audit-172.18.210.237</div></div>
<div class="wm" style="left:86px;top:822px"><div>audit审计03(Audit3)</div><div style="letter-spacing:-0.3px">audit-172.18.210.237</div></div>
<div class="wm" style="left:386px;top:822px"><div>audit审计03(Audit3)</div><div style="letter-spacing:-0.3px">audit-172.18.210.237</div></div>
<div class="wm" style="left:686px;top:822px"><div>audit审计03(Audit3)</div><div style="letter-spacing:-0.3px">audit-172.18.210.237</div></div>
<div class="wm" style="left:986px;top:822px"><div>audit审计03(Audit3)</div><div style="letter-spacing:-0.3px">audit-172.18.210.237</div></div>
<div class="wm" style="left:1286px;top:822px"><div>audit审计03(Audit3)</div><div style="letter-spacing:-0.3px">audit-172.18.210.237</div></div>
<div class="wm" style="left:1586px;top:822px"><div>audit审计03(Audit3)</div><div style="letter-spacing:-0.3px">audit-172.18.210.237</div></div>
</body></html>
